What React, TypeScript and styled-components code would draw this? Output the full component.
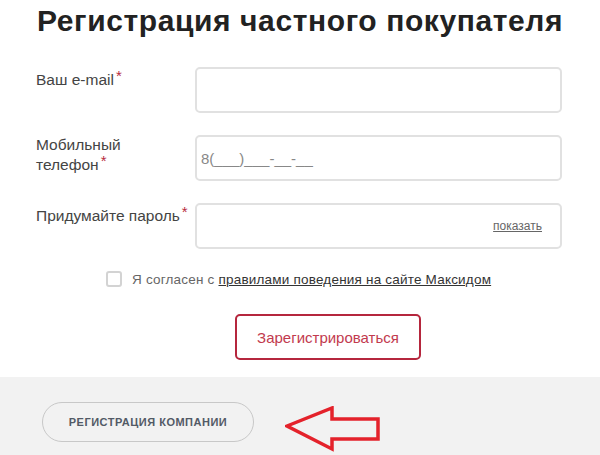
import React from 'react';
import styled, { createGlobalStyle } from 'styled-components';

const GlobalStyle = createGlobalStyle`
  html, body {
    margin: 0;
    padding: 0;
    background: #fff;
    font-family: "Liberation Sans", Arial, sans-serif;
  }
`;

const Page = styled.div`
  width: 600px;
  height: 455px;
  overflow: hidden;
  display: flex;
  flex-direction: column;
`;

const Main = styled.section`
  height: 377px;
  display: flex;
  flex-direction: column;
`;

const Title = styled.h1`
  margin: 3px 0 0;
  text-align: center;
  font-size: 30px;
  line-height: 36px;
  font-weight: 700;
  letter-spacing: 0.6px;
  color: #222;
`;

const Form = styled.form`
  margin-top: 28px;
  padding-left: 36px;
  display: flex;
  flex-direction: column;
  gap: 22px;
`;

const Row = styled.div`
  display: grid;
  grid-template-columns: 159px 367px;
  align-items: start;
`;

const Label = styled.label<{ $top: number }>`
  padding-top: ${(p) => p.$top}px;
  font-size: 15.5px;
  line-height: 20px;
  color: #444;
  white-space: nowrap;
`;

const Star = styled.span`
  display: inline-block;
  color: #b82b3e;
  font-size: 15px;
  line-height: 12px;
  height: 10px;
  margin-left: 2px;
  vertical-align: top;
  overflow: visible;
`;

const InputBox = styled.div`
  box-sizing: border-box;
  height: 46px;
  border: 2px solid #e1e1e1;
  border-radius: 5px;
  display: flex;
  align-items: center;
  justify-content: space-between;
  padding: 0 18px 0 4px;
`;

const Placeholder = styled.span`
  font-size: 15px;
  color: #888;
`;

const ShowLink = styled.span`
  margin-left: auto;
  font-size: 12px;
  color: #666;
  text-decoration: underline;
`;

const AgreeRow = styled.div`
  margin-top: 22px;
  padding-left: 106px;
  display: flex;
  align-items: center;
  gap: 10px;
  font-size: 13.5px;
  color: #666;
  letter-spacing: 0.2px;
`;

const Checkbox = styled.span`
  box-sizing: border-box;
  width: 16px;
  height: 16px;
  border: 2px solid #d3d3d3;
  border-radius: 3px;
`;

const RulesLink = styled.span`
  color: #333;
  text-decoration: underline;
`;

const SubmitRow = styled.div`
  margin-top: 27px;
  padding-left: 235px;
`;

const SubmitButton = styled.button`
  box-sizing: border-box;
  width: 186px;
  height: 46px;
  background: #fff;
  border: 2px solid #b5263d;
  border-radius: 5px;
  color: #c23a4e;
  font-family: "Liberation Sans", Arial, sans-serif;
  font-size: 15px;
`;

const Footer = styled.footer`
  flex: 1;
  background: #f2f2f2;
  display: flex;
  align-items: flex-start;
  padding: 25px 0 0 42px;
  gap: 31px;
`;

const CompanyButton = styled.button`
  box-sizing: border-box;
  width: 212px;
  height: 40px;
  background: transparent;
  border: 1px solid #c8c8c8;
  border-radius: 20px;
  color: #525a66;
  font-family: "Liberation Sans", Arial, sans-serif;
  font-size: 11px;
  font-weight: 700;
  letter-spacing: 0.5px;
  text-transform: uppercase;
`;

const ArrowSvg = styled.svg`
  margin-top: 4px;
  display: block;
`;

const Arrow = () => (
  <ArrowSvg width="98" height="46" viewBox="0 0 98 46">
    <polygon
      points="2,20 47,2 47,13 93,13 93,33 47,33 47,43"
      fill="none"
      stroke="#e4222b"
      strokeWidth="3.5"
      strokeLinejoin="miter"
    />
  </ArrowSvg>
);

export default function App() {
  return (
    <Page>
      <GlobalStyle />
      <Main>
        <Title>Регистрация частного покупателя</Title>
        <Form>
          <Row>
            <Label $top={3}>
              Ваш e-mail<Star>*</Star>
            </Label>
            <InputBox />
          </Row>
          <Row>
            <Label $top={0}>
              Мобильный
              <br />
              телефон<Star>*</Star>
            </Label>
            <InputBox>
              <Placeholder>8(___)___-__-__</Placeholder>
            </InputBox>
          </Row>
          <Row>
            <Label $top={3}>
              Придумайте пароль<Star>*</Star>
            </Label>
            <InputBox>
              <ShowLink>показать</ShowLink>
            </InputBox>
          </Row>
        </Form>
        <AgreeRow>
          <Checkbox />
          <span>
            Я согласен с <RulesLink>правилами поведения на сайте Максидом</RulesLink>
          </span>
        </AgreeRow>
        <SubmitRow>
          <SubmitButton type="button">Зарегистрироваться</SubmitButton>
        </SubmitRow>
      </Main>
      <Footer>
        <CompanyButton type="button">Регистрация компании</CompanyButton>
        <Arrow />
      </Footer>
    </Page>
  );
}
